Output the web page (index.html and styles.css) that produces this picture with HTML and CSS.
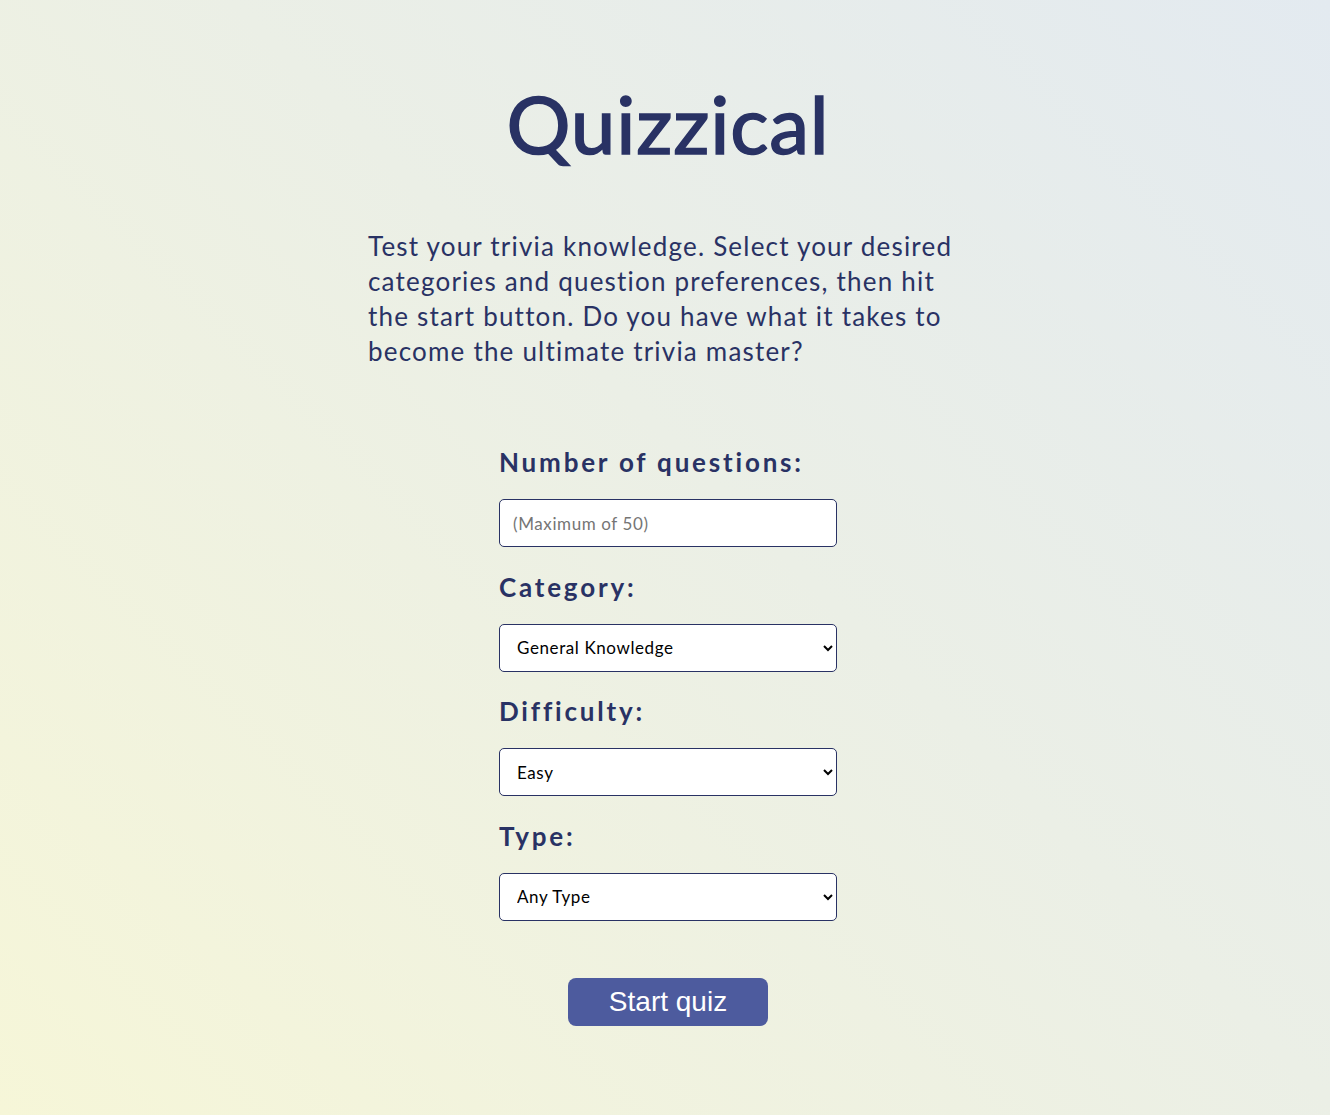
FILE: index.html
```html
<!DOCTYPE html>
<html lang="en">
<head>
<meta charset="utf-8">
<title>Quizzical</title>
<link rel="stylesheet" href="styles.css">
</head>
<body>
<main class="page">
  <h1 class="title">Quizzical</h1>
  <p class="intro">Test your trivia knowledge. Select your desired categories and question preferences, then hit the start button. Do you have what it takes to become the ultimate trivia master?</p>
  <form class="form">
    <div class="field">
      <label class="label" for="num">Number of questions:</label>
      <input class="control" id="num" type="text" placeholder="(Maximum of 50)">
    </div>
    <div class="field">
      <label class="label" for="cat">Category:</label>
      <select class="control select" id="cat"><option>General Knowledge</option></select>
    </div>
    <div class="field">
      <label class="label" for="diff">Difficulty:</label>
      <select class="control select" id="diff"><option>Easy</option></select>
    </div>
    <div class="field">
      <label class="label" for="type">Type:</label>
      <select class="control select" id="type"><option>Any Type</option></select>
    </div>
    <button class="start" type="button">Start quiz</button>
  </form>
</main>
</body>
</html>
```
FILE: styles.css
```css
html, body {
  margin: 0;
  padding: 0;
  height: 100%;
}
body {
  background: linear-gradient(225deg, #e3eaf0 0%, #ebefe6 45%, #f6f6d8 100%);
  font-family: Lato, "Noto Sans", sans-serif;
  color: #293264;
  min-height: 1115px;
  padding-left: 6px;
  box-sizing: border-box;
}
.page {
  width: 600px;
  margin: 0 auto;
  padding-top: 75px;
  display: flex;
  flex-direction: column;
  align-items: center;
}
.title {
  margin: 0;
  font-size: 80px;
  font-weight: 400;
  line-height: 96px;
  letter-spacing: 0.8px;
  -webkit-text-stroke: 1.6px #293264;
}
.intro {
  margin: 58px 0 0 0;
  width: 600px;
  font-size: 26px;
  line-height: 35px;
  letter-spacing: 1.2px;
}
.form {
  margin-top: 78px;
  width: 338px;
  display: flex;
  flex-direction: column;
}
.field {
  display: flex;
  flex-direction: column;
  margin-bottom: 24.5px;
}
.label {
  font-size: 26px;
  font-weight: 700;
  letter-spacing: 2.8px;
  line-height: 30px;
  margin-bottom: 22px;
}
.control {
  box-sizing: border-box;
  width: 338px;
  height: 48px;
  border: 1px solid #293264;
  border-radius: 5px;
  background: #fff;
  font-family: inherit;
  font-size: 17px;
  letter-spacing: 0.6px;
  color: #000;
  padding: 0 13px;
}
.control::placeholder {
  color: #757575;
}
.select {
  padding-left: 13px;
}
.start {
  align-self: center;
  margin-top: 32.5px;
  width: 200px;
  height: 48px;
  border: none;
  border-radius: 8px;
  background: #4d5b9e;
  color: #fff;
  font-family: "Liberation Sans", Arial, sans-serif;
  font-size: 28px;
}
```
